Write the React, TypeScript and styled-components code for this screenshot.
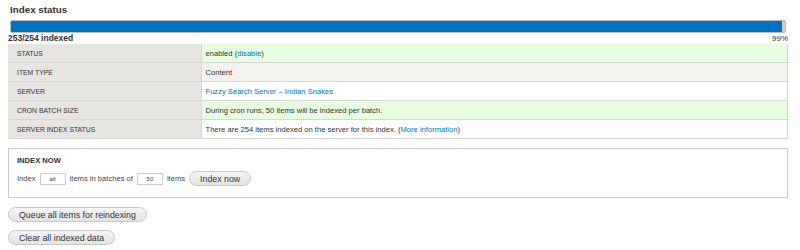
import React from "react";
import styled, { createGlobalStyle } from "styled-components";

const GlobalStyle = createGlobalStyle`
  body {
    margin: 0;
    background: #fff;
    font-family: "Liberation Sans", Arial, sans-serif;
    color: #222;
  }
`;

const Page = styled.div`
  width: 800px;
  padding: 3px 12px 0 8px;
  box-sizing: border-box;
`;

const Title = styled.h2`
  margin: 0 0 4px 2px;
  font-size: 9.8px;
  font-weight: bold;
  color: #333;
  line-height: 13px;
`;

const Progress = styled.div`
  margin: 0 2px;
  height: 11px;
  background: #ccc;
  border: 1px solid #bbb;
  border-radius: 2px;
  overflow: hidden;
`;

const ProgressFill = styled.div`
  height: 100%;
  background: #0072c2;
`;

const ProgressInfo = styled.div`
  display: flex;
  justify-content: space-between;
  align-items: baseline;
  font-size: 8px;
  line-height: 10px;
  color: #333;
`;

const Count = styled.span`
  font-weight: bold;
  font-size: 8.5px;
`;

const Table = styled.table`
  width: 100%;
  border-collapse: collapse;
  font-size: 7.6px;
`;

const Row = styled.tr<{ $tone: "ok" | "gray" | "white" }>`
  border-bottom: 1px solid #d8d8d4;
  background: ${(p) =>
    p.$tone === "ok" ? "#e6fde2" : p.$tone === "gray" ? "#f3f2ee" : "#fff"};
`;

const Label = styled.th`
  width: 193px;
  box-sizing: border-box;
  text-align: left;
  font-weight: normal;
  font-size: 6.8px;
  text-transform: uppercase;
  background: #e6e5e1;
  padding: 0 0 0 9px;
  height: 18px;
  border-right: 1px solid #d8d8d4;
  color: #333;
`;

const Value = styled.td`
  padding: 0 4px;
  height: 18px;
  border-right: 1px solid #d8d8d4;
  color: #333;
`;

const Link = styled.a`
  color: #0074bd;
  text-decoration: none;
`;

const Fieldset = styled.fieldset`
  margin: 9px 0 0;
  padding: 7px 8px 11px;
  border: 1px solid #ccc;
  min-width: 0;
`;

const Legend = styled.div`
  font-size: 7.6px;
  font-weight: bold;
  color: #333;
  margin-bottom: 6px;
`;

const FormRow = styled.div`
  display: flex;
  align-items: center;
  gap: 4px;
  font-size: 7.6px;
  color: #444;
`;

const SmallInput = styled.input`
  width: 26px;
  height: 12px;
  box-sizing: border-box;
  border: 1px solid #ccc;
  font-size: 6px;
  text-align: center;
  padding: 0;
  font-family: inherit;
  color: #444;
`;

const Button = styled.button`
  font-family: inherit;
  font-size: 8.8px;
  color: #333;
  height: 15px;
  padding: 0 10px;
  border: 1px solid #c8c8c8;
  border-radius: 8px;
  background: linear-gradient(#f6f6f6, #e3e3e3);
  cursor: pointer;
`;

const Actions = styled.div`
  display: flex;
  flex-direction: column;
  align-items: flex-start;
  gap: 8px;
  margin-top: 9px;
`;

export default function App() {
  return (
    <Page>
      <GlobalStyle />
      <Title>Index status</Title>
      <Progress>
        <ProgressFill style={{ width: `${(253 / 254) * 100}%` }} />
      </Progress>
      <ProgressInfo>
        <Count>253/254 indexed</Count>
        <span>99%</span>
      </ProgressInfo>
      <Table>
        <tbody>
          <Row $tone="ok">
            <Label>Status</Label>
            <Value>
              enabled (<Link href="#">disable</Link>)
            </Value>
          </Row>
          <Row $tone="gray">
            <Label>Item type</Label>
            <Value>Content</Value>
          </Row>
          <Row $tone="white">
            <Label>Server</Label>
            <Value>
              <Link href="#">Fuzzy Search Server – Indian Snakes</Link>
            </Value>
          </Row>
          <Row $tone="ok">
            <Label>Cron batch size</Label>
            <Value>During cron runs, 50 items will be indexed per batch.</Value>
          </Row>
          <Row $tone="white">
            <Label>Server index status</Label>
            <Value>
              There are 254 items indexed on the server for this index. (
              <Link href="#">More information</Link>)
            </Value>
          </Row>
        </tbody>
      </Table>
      <Fieldset>
        <Legend>INDEX NOW</Legend>
        <FormRow>
          Index <SmallInput defaultValue="all" /> items in batches of{" "}
          <SmallInput defaultValue="50" /> items
          <Button>Index now</Button>
        </FormRow>
      </Fieldset>
      <Actions>
        <Button>Queue all items for reindexing</Button>
        <Button>Clear all indexed data</Button>
      </Actions>
    </Page>
  );
}
